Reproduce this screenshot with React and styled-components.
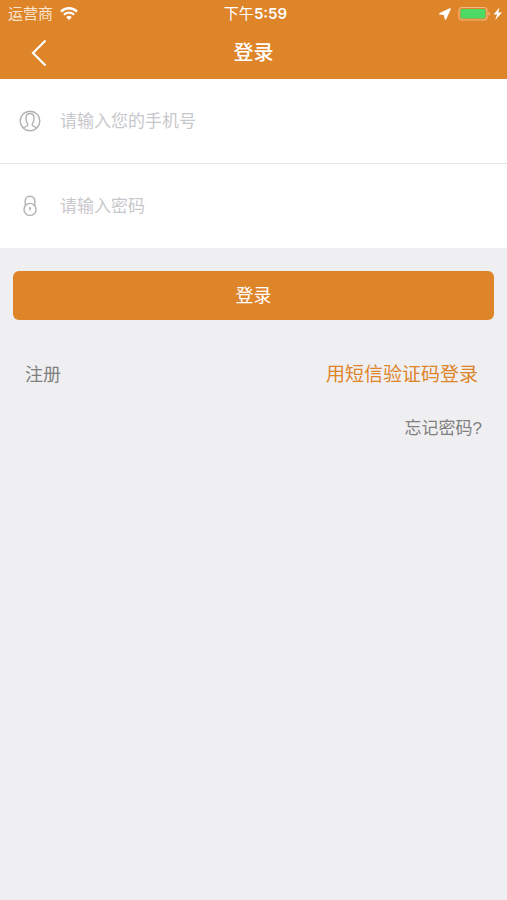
import React, { useState } from "react";
import styled, { createGlobalStyle } from "styled-components";

const App = () => {
  const [phone, setPhone] = useState("");
  const [password, setPassword] = useState("");

  const handleSubmit = (e) => {
    e.preventDefault();
  };

  return (
    <>
      <GlobalStyle />
      <Header>
        <StatusBar>
          <StatusLeft>
            <Carrier>运营商</Carrier>
            <WifiIcon />
          </StatusLeft>
          <Time>
            下午<Digits>5:59</Digits>
          </Time>
          <StatusRight>
            <LocationIcon />
            <BatteryIcon />
          </StatusRight>
        </StatusBar>
        <TitleBar>
          <BackButton type="button" aria-label="返回">
            <BackIcon />
          </BackButton>
          <Title>登录</Title>
        </TitleBar>
      </Header>
      <main>
        <form onSubmit={handleSubmit}>
          <Field>
            <FieldLabel htmlFor="phone" aria-label="手机号">
              <UserIcon />
            </FieldLabel>
            <Input
              id="phone"
              type="tel"
              placeholder="请输入您的手机号"
              value={phone}
              onChange={(e) => setPhone(e.target.value)}
            />
          </Field>
          <Field>
            <FieldLabel htmlFor="password" aria-label="密码">
              <LockIcon />
            </FieldLabel>
            <Input
              id="password"
              type="password"
              placeholder="请输入密码"
              value={password}
              onChange={(e) => setPassword(e.target.value)}
            />
          </Field>
          <SubmitButton type="submit">登录</SubmitButton>
        </form>
        <LinkRow>
          <TextLink href="#register">注册</TextLink>
          <SmsLink href="#sms">用短信验证码登录</SmsLink>
        </LinkRow>
        <ForgotRow>
          <ForgotLink href="#forgot">忘记密码?</ForgotLink>
        </ForgotRow>
      </main>
    </>
  );
};

export default App;

const WifiIcon = () => (
  <svg width="18" height="14" viewBox="0 0 18 14" fill="none" stroke="#fff">
    <path d="M1 4.6a11.4 11.4 0 0 1 16 0" strokeWidth="2.4" />
    <path d="M3.9 7.8a7.2 7.2 0 0 1 10.2 0" strokeWidth="2.2" />
    <path d="M9 13 6.2 10.2a4 4 0 0 1 5.600 0z" fill="#fff" stroke="none" />
  </svg>
);

const LocationIcon = () => (
  <svg width="12" height="12" viewBox="0 0 12 12" fill="#fff">
    <path
      d="M11 1 1 5.8l4.600.7.900 4.500z"
      stroke="#fff"
      strokeWidth="1.6"
      strokeLinejoin="round"
    />
  </svg>
);

// Battery body, its cap and the charging bolt
const BatteryIcon = () => (
  <svg width="45" height="16" viewBox="0 0 45 16">
    <rect
      x="1"
      y="1.5"
      width="28"
      height="12.5"
      rx="3"
      fill="none"
      stroke="#f6b780"
      strokeWidth="1.2"
    />
    <rect x="2.5" y="3" width="25" height="9.5" rx="1.5" fill="#4cd964" />
    <path d="M30.5 5.5c2 .6 2 3.8 0 4.4z" fill="#f6b780" />
    <path d="M41.5 1.5 35.5 8.5H39L37.2 14 44 6.4h-3.7z" fill="#fff" />
  </svg>
);

const BackIcon = () => (
  <svg
    width="16"
    height="28"
    viewBox="0 0 16 28"
    fill="none"
    stroke="#fff"
    strokeWidth="2.2"
  >
    <path d="M14.5 1.5 2 14l12.5 12.5" />
  </svg>
);

const UserIcon = () => (
  <svg
    width="22"
    height="22"
    viewBox="0 0 22 22"
    fill="none"
    stroke="#b2b2b2"
    strokeWidth="1.4"
  >
    <circle cx="11" cy="11" r="9.8" />
    <path d="M4.200 18c1-1.300 2.800-1.300 3.900-2 .9-.6.700-1.900.2-2.800C7.400 11.900 7 10.200 7 8c0-2.900 1.500-4.500 4-4.500S15 5.100 15 8c0 2.200-.4 3.900-1.300 5.200-.5.900-.7 2.200.2 2.800 1.100.7 2.900.7 3.900 2" />
  </svg>
);

const LockIcon = () => (
  <svg
    width="22"
    height="22"
    viewBox="0 0 22 22"
    fill="none"
    stroke="#b2b2b2"
    strokeWidth="1.4"
  >
    <circle cx="11" cy="14.4" r="6" />
    <path d="M6.200 10.500V6a4.800 4.800 0 0 1 9.600 0v4.500" />
    <circle cx="11" cy="13.200" r="1.100" fill="#b2b2b2" stroke="none" />
    <path d="M11 13.500v2.500" strokeWidth="1" />
  </svg>
);

const GlobalStyle = createGlobalStyle`
  * {
    box-sizing: border-box;
  }

  body {
    margin: 0;
    min-height: 100vh;
    background-color: #efeff1;
    font-family: "Liberation Sans", "Noto Sans CJK SC", sans-serif;
  }

  svg {
    display: block;
    flex-shrink: 0;
  }
`;

const Header = styled.header`
  background-color: #de8429;
  color: white;
`;

const StatusBar = styled.div`
  display: grid;
  grid-template-columns: 1fr auto 1fr;
  align-items: center;
  height: 27px;
  padding: 0 4px 0 8px;
  font-size: 15px;
  line-height: 20px;
`;

const StatusLeft = styled.div`
  display: flex;
  align-items: center;
  gap: 7px;
`;

const StatusRight = styled(StatusLeft)`
  justify-content: flex-end;
`;

const Carrier = styled.span`
  color: #fbe6d2;
`;

const Time = styled.span`
  font-family: Inter, "Noto Sans CJK SC", sans-serif;
`;

const Digits = styled.span`
  font-weight: 600;
`;

const TitleBar = styled.div`
  display: grid;
  grid-template-columns: 60px 1fr 60px;
  align-items: center;
  height: 52px;
`;

const BackButton = styled.button`
  display: flex;
  align-items: center;
  height: 50px;
  padding: 0 0 0 31px;
  border: none;
  background: none;
  cursor: pointer;
`;

const Title = styled.h1`
  margin: 0;
  font-size: 20px;
  font-weight: 500;
  line-height: 28px;
  text-align: center;
`;

const Field = styled.div`
  display: flex;
  align-items: center;
  height: 84px;
  padding: 0 19px;
  background-color: white;

  & + & {
    height: 85px;
    border-top: 1px solid #e6e6e8;
  }
`;

const FieldLabel = styled.label`
  margin-right: 19px;
`;

const Input = styled.input`
  flex: 1;
  min-width: 0;
  height: 48px;
  padding: 2px 0 0;
  border: none;
  outline: none;
  background: none;
  color: #333;
  font-family: inherit;
  font-size: 17px;

  &::placeholder {
    color: #c8c8cc;
    opacity: 1;
  }
`;

const SubmitButton = styled.button`
  display: block;
  width: calc(100% - 26px);
  height: 49px;
  margin: 23px 13px 0;
  border: none;
  border-radius: 6px;
  background-color: #de8429;
  color: white;
  font-family: inherit;
  font-size: 18px;
  line-height: 28px;
  cursor: pointer;
`;

const LinkRow = styled.div`
  display: flex;
  justify-content: space-between;
  align-items: center;
  margin-top: 40px;
  padding: 0 29px 0 25px;
`;

const TextLink = styled.a`
  color: #808080;
  font-size: 18px;
  line-height: 28px;
  text-decoration: none;
`;

const SmsLink = styled(TextLink)`
  color: #de8429;
  font-size: 19px;
  line-height: 30px;
`;

const ForgotRow = styled.div`
  display: flex;
  justify-content: flex-end;
  margin-top: 25px;
  padding: 0 25px;
`;

const ForgotLink = styled(TextLink)`
  font-size: 17px;
`;
